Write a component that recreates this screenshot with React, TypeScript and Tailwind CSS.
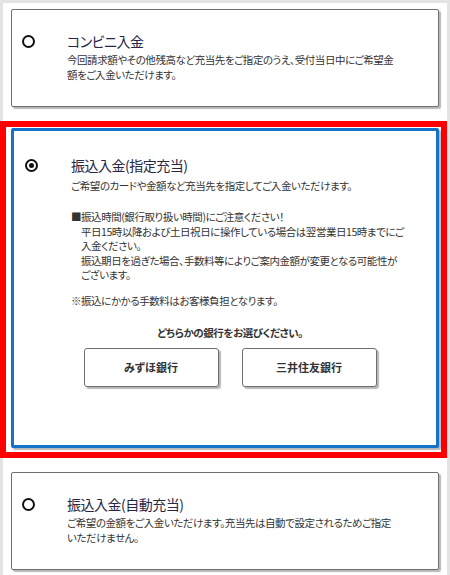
import React from "react";

const jp = "font-['Noto_Sans_CJK_JP','Noto_Sans',sans-serif] [font-feature-settings:'palt']";

function Radio({ checked }: { checked?: boolean }) {
  return (
    <span className="w-[13px] h-[13px] rounded-full border-2 border-[#111] flex items-center justify-center shrink-0 mt-[4px]">
      {checked && <span className="w-[5px] h-[5px] rounded-full bg-[#111]" />}
    </span>
  );
}

function PlainCard({ title, lines }: { title: string; lines: string[] }) {
  return (
    <div className="mx-[8px] h-[98px] bg-white border border-[#6f6f6f] rounded-[2px] shadow-[2px_2px_1px_rgba(0,0,0,0.28)] flex items-start pl-[10px] pt-[21px]">
      <Radio />
      <div className="ml-[32px]">
        <div className="text-[14px] tracking-[-0.5px] leading-[20px] text-[#2a2545]">{title}</div>
        <div className="mt-[1px] text-[10.5px] tracking-[-0.45px] leading-[15px] text-[#333] whitespace-nowrap">
          {lines.map((l) => (
            <div key={l}>{l}</div>
          ))}
        </div>
      </div>
    </div>
  );
}

function BankButton({ label }: { label: string }) {
  return (
    <button className="w-[135px] h-[39px] bg-white border border-[#6f6f6f] rounded-[3px] shadow-[2px_2px_1px_rgba(0,0,0,0.28)] text-[11px] font-bold text-[#333]">
      {label}
    </button>
  );
}

export default function App() {
  return (
    <div className={`w-[450px] h-[575px] bg-[#e3e3e3] overflow-hidden pl-[3px] pr-[3px] pt-[3px] ${jp}`}>
      <div className="bg-white h-full pt-[6px] flex flex-col">
        {/* コンビニ */}
        <PlainCard
          title="コンビニ入金"
          lines={[
            "今回請求額やその他残高など充当先をご指定のうえ、受付当日中にご希望金",
            "額をご入金いただけます。",
          ]}
        />

        {/* Highlighted option */}
        <div className="mt-[14px] -ml-[3px] w-[447px] border-[6px] border-[#ff0000] pl-[5px] pr-[2px] pt-[1px] pb-[4px]">
          <div className="h-[320px] bg-white border-[3px] border-[#1672c9] rounded-[2px] shadow-[2px_2px_1px_rgba(0,0,0,0.28)] flex items-start pl-[11px] pt-[24px]">
            <Radio checked />
            <div className="ml-[33px] w-[318px]">
              <div className="text-[14px] tracking-[-0.5px] leading-[20px] text-[#2a2545]">振込入金(指定充当)</div>
              <div className="mt-[4px] text-[10.5px] tracking-[-0.45px] leading-[14.5px] text-[#333] whitespace-nowrap">
                <div>ご希望のカードや金額など充当先を指定してご入金いただけます。</div>
                <div className="mt-[16.5px]">■振込時間(銀行取り扱い時間)にご注意ください！</div>
                <div className="pl-[10px]">
                  <div>平日15時以降および土日祝日に操作している場合は翌営業日15時までにご</div>
                  <div>入金ください。</div>
                  <div>振込期日を過ぎた場合、手数料等によりご案内金額が変更となる可能性が</div>
                  <div>ございます。</div>
                </div>
                <div className="mt-[11px]">※振込にかかる手数料はお客様負担となります。</div>
                <div className="mt-[18px] text-center font-bold">どちらかの銀行をお選びください。</div>
              </div>
              <div className="mt-[7px] flex justify-center gap-[23px]">
                <BankButton label="みずほ銀行" />
                <BankButton label="三井住友銀行" />
              </div>
            </div>
          </div>
        </div>

        <div className="mt-[14px]">
          <PlainCard
            title="振込入金(自動充当)"
            lines={[
              "ご希望の金額をご入金いただけます。充当先は自動で設定されるためご指定",
              "いただけません。",
            ]}
          />
        </div>
      </div>
    </div>
  );
}
